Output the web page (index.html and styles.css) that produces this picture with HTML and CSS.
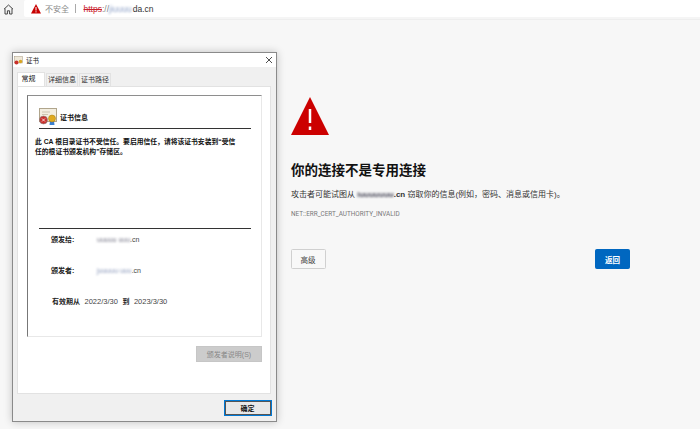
FILE: index.html
```html
<!DOCTYPE html>
<html lang="zh-CN">
<head>
<meta charset="utf-8">
<title>证书</title>
<link rel="stylesheet" href="styles.css">
</head>
<body>
<header class="toolbar">
  <div class="home">
    <svg width="11" height="11" viewBox="0 0 11 11" fill="none" stroke="#444" stroke-width="1"><path d="M1 5.2 5.500 1 10 5.200M2 4.600V10H4.400V6.800H6.600V10H9V4.600"/></svg>
  </div>
  <div class="address">
    <svg class="warn" width="10" height="10" viewBox="0 0 10 10"><path d="M5 0 10 9.500H0Z" fill="#c80000"/><path d="M5 3V6.500M5 7.300V8.400" stroke="#fff" stroke-width="1"/></svg>
    <span class="insecure">不安全</span>
    <span class="sep"></span>
    <span class="url"><s class="scheme">https</s><span class="slashes">://</span><span class="blur blur-url">jiuuuu</span><span>da.cn</span></span>
  </div>
</header>

<main class="page">
  <svg class="big-warn" width="38" height="38" viewBox="0 0 38 38"><path d="M19 0 38 38H0Z" fill="#cc0000"/><path d="M19 12V26M19 29.500V33" stroke="#fff" stroke-width="2.500"/></svg>
  <h1 class="headline">你的连接不是专用连接</h1>
  <p class="desc">攻击者可能试图从 <b class="domain"><span class="blur blur-host">iuuuuuuu</span>.cn</b> 窃取你的信息(例如&#xFF0C;密码、消息或信用卡)。</p>
  <p class="code">NET::ERR_CERT_AUTHORITY_INVALID</p>
  <div class="actions">
    <button class="btn">高级</button>
    <button class="btn primary">返回</button>
  </div>
</main>

<section class="dialog">
  <div class="titlebar">
    <svg width="9" height="9" viewBox="0 0 18 18"><rect x="1" y="1" width="16" height="13" fill="#efe8d8" stroke="#a89a80"/><circle cx="5" cy="13" r="4" fill="#c9302c"/><circle cx="13" cy="11" r="3.500" fill="#d9a520"/></svg>
    <span class="title">证书</span>
    <svg class="close" width="8" height="8" viewBox="0 0 8 8" stroke="#222" stroke-width=".8"><path d="M1 1 7 7M7 1 1 7"/></svg>
  </div>
  <div class="dialog-body">
    <nav class="tabs">
      <span class="tab active">常规</span>
      <span class="tab">详细信息</span>
      <span class="tab">证书路径</span>
    </nav>
    <div class="tab-panel">
      <div class="info">
        <div class="info-head">
          <svg width="18" height="17" viewBox="0 0 18 17"><rect x=".5" y=".5" width="17" height="13" fill="#f3eee0" stroke="#b0a58c"/><path d="M3 4H11M3 6.500H9" stroke="#cfc6b0"/><circle cx="4.500" cy="12" r="4" fill="#c9302c" stroke="#888" stroke-width=".6"/><path d="M3 10.500 6 13.500M6 10.500 3 13.500" stroke="#fff" stroke-width=".8"/><path d="M11 13 10.500 17H15.500L15 13" fill="#3b7fd0"/><circle cx="13" cy="10.500" r="3.500" fill="#e0aa20" stroke="#a57c10" stroke-width=".5"/></svg>
          <span>证书信息</span>
        </div>
        <p class="info-text">此 CA 根目录证书不受信任。要启用信任&#xFF0C;请将该证书安装到“受信任的根证书颁发机构”存储区。</p>
        <div class="fields">
          <div class="field"><b>颁发给:</b><span class="field-value"><span class="blur blur-a">uuuuu uuu</span>.cn</span></div>
          <div class="field"><b>颁发者:</b><span class="field-value"><span class="blur blur-b">juuuuu uuu</span>.cn</span></div>
          <div class="validity"><b>有效期从</b><span class="date">2022/3/30</span><b>到</b><span class="date">2023/3/30</span></div>
        </div>
      </div>
      <div class="panel-actions"><button class="issuer-btn" disabled>颁发者说明(S)</button></div>
    </div>
  </div>
  <div class="dialog-footer"><button class="ok">确定</button></div>
</section>
</body>
</html>
```

FILE: styles.css
```css
* { box-sizing: border-box; }
html, body { margin: 0; height: 100%; }
body {
  width: 700px;
  height: 429px;
  overflow: hidden;
  background: #f7f7f7;
  color: #111;
  font-family: "Liberation Sans", "Noto Sans CJK SC", sans-serif;
  position: relative;
}
p, h1 { margin: 0; }
button { font-family: inherit; padding: 0; }

.toolbar {
  display: flex;
  height: 20px;
  padding-bottom: 2px;
  background: #f5f5f5;
  border-bottom: 1px solid #eeeeee;
}
.home { width: 24px; display: flex; justify-content: center; align-items: center; padding-right: 8px; padding-top: 2px; }
.address {
  flex: 1;
  background: #fff;
  display: flex;
  align-items: center;
  padding-left: 7px;
  font-size: 8.500px;
  border-radius: 2px 0 0 2px;
}
.warn { margin-right: 4px; }
.insecure { color: #8a8a8a; width: 24px; font-size: 8px; white-space: nowrap; }
.sep { width: 1px; height: 9px; background: #aaa; margin: 0 7.500px 0 6px; }
.url { color: #333; white-space: nowrap; }
.scheme { color: #c8202c; }
.slashes { color: #888; }
.blur { filter: blur(1.200px); }
.blur-url { color: #8fa2c8; display: inline-block; margin-right: 1px; }

.page { padding: 77px 0 0 291px; width: 630px; }
.big-warn { display: block; }
.headline { font-size: 13.500px; line-height: 18px; font-weight: 700; margin-top: 27px; color: #111; }
.desc { font-size: 8px; line-height: 12px; margin-top: 9px; color: #333; white-space: nowrap; }
.domain { font-weight: 700; color: #333; }
.blur-host { color: #445; display: inline-block; }
.code { font-family: Roboto, "Liberation Sans", sans-serif; font-size: 6.400px; line-height: 10px; margin-top: 8px; color: #777; white-space: nowrap; }
.actions { display: flex; justify-content: space-between; margin-top: 30px; margin-left: -0.500px; }
.btn {
  width: 35px;
  height: 20px;
  border: 1px solid #d0d0d0;
  border-radius: 1.500px;
  background: #f8f8f8;
  color: #444;
  font-size: 7.500px;
}
.primary { background: #0067c0; border-color: #0067c0; color: #fff; font-weight: 700; }

.dialog {
  position: absolute;
  left: 12px;
  top: 52px;
  width: 265px;
  height: 370px;
  display: flex;
  flex-direction: column;
  background: #f0f0f0;
  border: 1px solid #8a8a8a;
  border-width: 1px 1.500px 1.500px 1px;
  box-shadow: 0 0 8px rgba(0, 0, 0, .22);
}
.titlebar {
  height: 14px;
  flex: none;
  display: flex;
  align-items: center;
  padding: 0 3px 0 1px;
  background: #fff;
  font-size: 6.500px;
  color: #222;
}
.title { margin-left: 3px; }
.close { margin-left: auto; }
.dialog-body { flex: 1; display: flex; flex-direction: column; padding: 5px 5px 0 4px; min-height: 0; }
.tabs { display: flex; height: 14px; font-size: 7px; color: #333; flex: none; position: relative; z-index: 1; }
.tab {
  width: 32px;
  height: 13px;
  margin-top: 1px;
  margin-left: 1px;
  padding-bottom: 2px;
  display: flex;
  align-items: center;
  justify-content: center;
  background: #f0f0f0;
  border: 1px solid #e2e2e2;
  border-bottom: 0;
}
.tab.active {
  width: 28px;
  height: 14px;
  margin: 0;
  background: #fff;
  color: #111;
  padding-right: 5px;
  padding-bottom: 3px;
  border-color: #e2e2e2;
}
.tab-panel {
  flex: 1;
  background: #fff;
  border: 1px solid #e2e2e2;
  padding: 8px 8px 0 9px;
  display: flex;
  flex-direction: column;
}
.info {
  height: 242px;
  flex: none;
  border: 1px solid #e8e8e8;
  border-top: 1.500px solid #8e8e8e;
  border-left: 1px solid #777;
  padding: 12.500px 10px 0 7px;
  display: flex;
  flex-direction: column;
}
.info-head {
  margin-left: 4px;
  height: 20px;
  padding-bottom: 3px;
  display: flex;
  align-items: center;
  gap: 3px;
  border-bottom: 1px solid #333;
  font-size: 7px;
  font-weight: 700;
}
.info-text { font-size: 6.800px; line-height: 10px; font-weight: 700; margin-top: 8px; width: 204px; color: #111; }
.fields {
  margin: 71px 0 0 4px;
  border-top: 1px solid #333;
  font-size: 7px;
  color: #444;
  display: flex;
  flex-direction: column;
  gap: 10px;
}
.field { display: flex; align-items: center; height: 21px; padding-left: 12px; }
.field b, .validity b { color: #222; }
.field b { width: 46px; }
.blur-a, .blur-b { color: #778; display: inline-block; }
.blur-b { color: #8a98ba; }
.field-value { white-space: nowrap; }
.validity { display: flex; gap: 4.500px; height: 21px; align-items: center; padding-left: 13px; }
.date { font-size: 7.500px; }
.panel-actions { display: flex; justify-content: flex-end; margin-top: 9px; }
.issuer-btn {
  width: 66px;
  height: 16px;
  border: 1px solid #c6c6c6;
  background: #cccccc;
  color: #888;
  font-size: 7px;
}
.dialog-footer { height: 27px; flex: none; display: flex; justify-content: flex-end; align-items: center; padding: 0 4.500px 0 0; }
.ok {
  width: 48px;
  height: 16px;
  border: 1.500px solid #0078d4;
  outline: 1px solid #555;
  outline-offset: -2.500px;
  background: #e8e8e8;
  color: #111;
  font-size: 7px;
  font-weight: 700;
}
```
